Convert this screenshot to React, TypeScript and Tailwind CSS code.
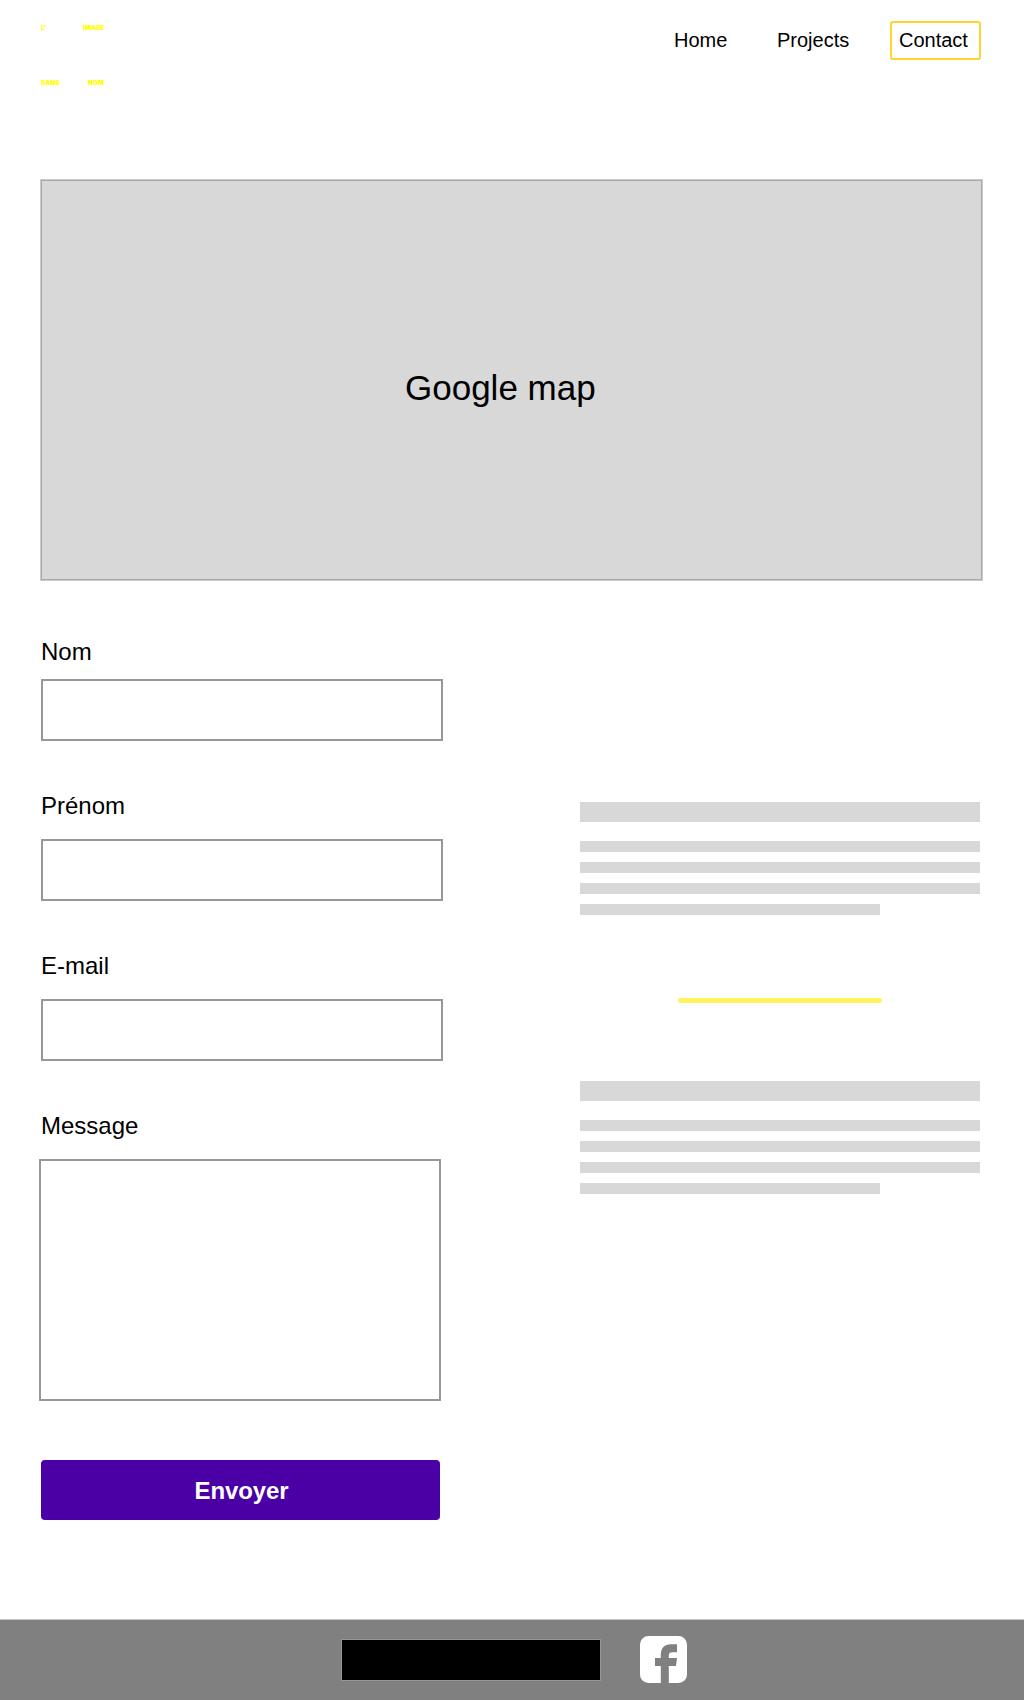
import React from "react";

function Logo() {
  return (
    <div className="mt-[25px] flex h-[62px] w-[63px] flex-col justify-between font-['Inter'] text-[6.5px] leading-[7px] font-black text-[#ffff00]">
      <div className="flex justify-between">
        <span>L’</span>
        <span className="tracking-[-0.15px]">IMAGE</span>
      </div>
      <div className="flex justify-between">
        <span>SANS</span>
        <span>NOM</span>
      </div>
    </div>
  );
}

function Header() {
  return (
    <header className="flex h-[179px] items-start justify-between pr-[43px] pl-[41px]">
      <Logo />
      <nav className="mt-[21px] flex text-[20px] leading-[23px]">
        <a className="mt-[8px] w-[103px]">Home</a>
        <a className="mt-[8px] w-[113px]">Projects</a>
        <a className="h-[39px] w-[91px] rounded-[3px] border-2 border-[#ffd42e] pt-[6px] pl-[7px]">
          Contact
        </a>
      </nav>
    </header>
  );
}

type FieldProps = { label: string; gap: string; multiline?: boolean };

function Field({ label, gap, multiline }: FieldProps) {
  return (
    <label className="flex flex-col">
      <span className={`text-[24px] leading-[28px] ${gap}`}>{label}</span>
      {multiline ? (
        <textarea className="-ml-[2px] block h-[242px] w-[402px] resize-none border-2 border-[#979797] outline-none" />
      ) : (
        <input className="block h-[62px] w-[402px] border-2 border-[#979797] outline-none" />
      )}
    </label>
  );
}

function TextBlock() {
  return (
    <div className="flex w-[400px] flex-col gap-[10px]">
      <div className="mb-[9px] h-[20px] bg-[#d8d8d8]" />
      <div className="h-[11px] bg-[#d8d8d8]" />
      <div className="h-[11px] bg-[#d8d8d8]" />
      <div className="h-[11px] bg-[#d8d8d8]" />
      <div className="h-[11px] w-[300px] bg-[#d8d8d8]" />
    </div>
  );
}

function Footer() {
  return (
    <footer className="flex h-[81px] border-t border-[#c4c6c4] bg-[#808080] pl-[341px]">
      <div className="mt-[19px] h-[42px] w-[260px] border border-[#979797] bg-black" />
      <svg className="mt-[16px] ml-[39px] h-[47px] w-[47px]" viewBox="0 0 47 47">
        <rect width="47" height="47" rx="8.5" fill="#fff" />
        <path
          d="M20.8 47V30H15v-8h5.8v-3.2C20.8 12 24.4 8.2 31 8.2h6v8h-4.4c-2.8 0-3.8.8-3.8 3.2V22H37l-1 8h-7.2v17z"
          fill="#808080"
        />
      </svg>
    </footer>
  );
}

export default function App() {
  return (
    <div className="flex h-[1700px] w-[1024px] flex-col overflow-hidden bg-white font-['Liberation_Sans',sans-serif] text-black">
      <Header />
      <section className="ml-[40px] h-[402px] w-[943px] border border-[#cbcbcb]">
        <div className="h-full border border-[#a8a8a8] bg-[#d8d8d8] pt-[187px] pl-[363px] text-[35px] leading-[40px]">
          Google map
        </div>
      </section>
      <main className="flex flex-1 items-start">
        <form className="ml-[41px] w-[539px] pt-[57px]">
          <Field label="Nom" gap="mb-[13px]" />
          <div className="mt-[51px]">
            <Field label="Prénom" gap="mb-[19px]" />
          </div>
          <div className="mt-[51px]">
            <Field label="E-mail" gap="mb-[19px]" />
          </div>
          <div className="mt-[51px]">
            <Field label="Message" gap="mb-[19px]" multiline />
          </div>
          <button
            type="button"
            className="mt-[59px] block h-[60px] w-[399px] rounded-[4px] bg-[#4b00a5] pt-[1px] pl-[2px] text-[24px] font-bold tracking-[-0.1px] text-white"
          >
            Envoyer
          </button>
        </form>
        <aside className="pt-[221px]">
          <TextBlock />
          <div className="mt-[83px] mb-[78px] ml-[98px] h-[5px] w-[204px] rounded-full bg-[#fff55a]" />
          <TextBlock />
        </aside>
      </main>
      <Footer />
    </div>
  );
}
